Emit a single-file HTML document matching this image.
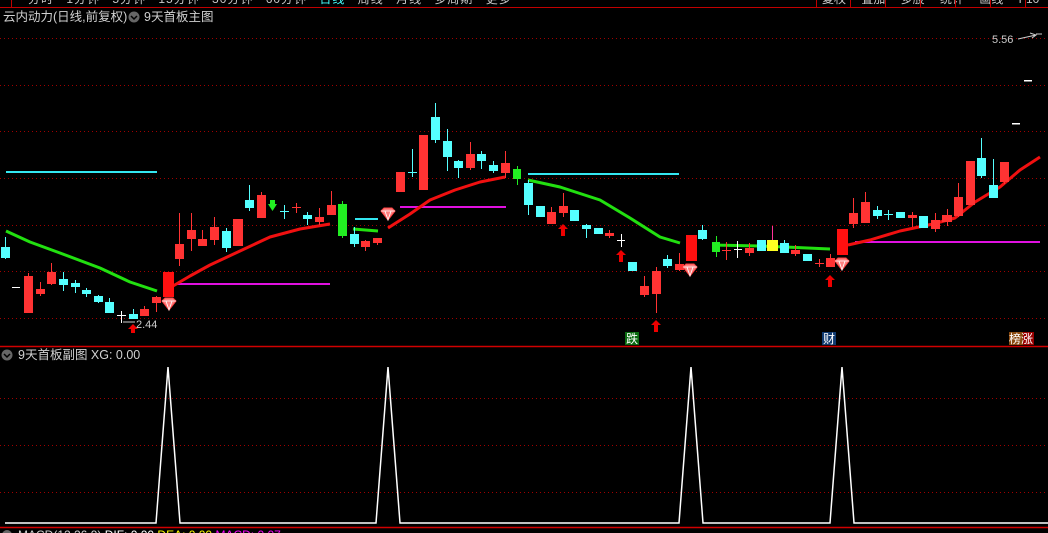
<!DOCTYPE html>
<html><head><meta charset="utf-8">
<style>
html,body{margin:0;padding:0;background:#000;width:1048px;height:533px;overflow:hidden}
svg{display:block}
text{font-family:"Liberation Sans","Noto Sans CJK SC",sans-serif}
</style></head><body>
<svg width="1048" height="533" viewBox="0 0 1048 533" xmlns="http://www.w3.org/2000/svg">
<rect width="1048" height="533" fill="#000"/>
<g font-size="12" fill="#c8c8c8">
<text x="28" y="3" word-spacing="8" letter-spacing="1">分时 1分钟 5分钟 15分钟 30分钟 60分钟 <tspan fill="#4ff">日线</tspan> 周线 月线 多周期 更多</text>
<text x="822" y="3" word-spacing="12">复权 叠加 多股 统计 画线 F10 标记</text>
</g>
<line x1="0" y1="7.5" x2="1048" y2="7.5" stroke="#c00000"/>
<g stroke="#c00000"><line x1="11.5" y1="0" x2="11.5" y2="7"/><line x1="816.5" y1="0" x2="816.5" y2="7"/><line x1="850.5" y1="0" x2="850.5" y2="7"/><line x1="885.5" y1="0" x2="885.5" y2="7"/><line x1="920.5" y1="0" x2="920.5" y2="7"/><line x1="955.5" y1="0" x2="955.5" y2="7"/><line x1="990.5" y1="0" x2="990.5" y2="7"/><line x1="1025.5" y1="0" x2="1025.5" y2="7"/></g>
<text x="3" y="21" font-size="12.5" fill="#d0d0d0">云内动力(日线,前复权)</text>
<circle cx="134" cy="17" r="5.5" fill="#666"/><path d="M131 16l3 3 3-3" stroke="#000" stroke-width="1.5" fill="none"/>
<text x="144" y="21" font-size="12.5" fill="#d0d0d0">9天首板主图</text>
<g stroke="#a00000" stroke-dasharray="1,3">
<line x1="0" y1="38.5" x2="1048" y2="38.5"/><line x1="0" y1="85.5" x2="1048" y2="85.5"/><line x1="0" y1="131.5" x2="1048" y2="131.5"/><line x1="0" y1="178.5" x2="1048" y2="178.5"/><line x1="0" y1="225.5" x2="1048" y2="225.5"/><line x1="0" y1="271.5" x2="1048" y2="271.5"/><line x1="0" y1="318.5" x2="1048" y2="318.5"/>
<line x1="0" y1="398.5" x2="1048" y2="398.5"/><line x1="0" y1="445.5" x2="1048" y2="445.5"/><line x1="0" y1="492.5" x2="1048" y2="492.5"/>
</g>
<text x="992" y="43" font-size="11" fill="#ccc">5.56</text>
<path d="M1018 39 L1036 35 M1030 33l6 2-4 3 M1036 34h6" stroke="#ccc" fill="none"/>
<rect x="1024" y="80" width="8" height="1.5" fill="#fff"/><rect x="1012" y="123" width="8" height="1.5" fill="#fff"/>
<g stroke-width="2">
<line x1="6" y1="172" x2="157" y2="172" stroke="#33e6f0"/>
<line x1="175" y1="284" x2="330" y2="284" stroke="#e010e0"/>
<line x1="355" y1="219" x2="378" y2="219" stroke="#33e6f0"/>
<line x1="400" y1="207" x2="506" y2="207" stroke="#e010e0"/>
<line x1="528" y1="174" x2="679" y2="174" stroke="#33e6f0"/>
<line x1="855" y1="242" x2="1040" y2="242" stroke="#e010e0"/>
</g>
<g fill="none" stroke-width="3" stroke-linejoin="round">
<polyline stroke="#22e010" points="6,231 30,242 60,253 100,268 130,282 157,291"/>
<polyline stroke="#22e010" points="353,229 378,231"/>
<polyline stroke="#22e010" points="528,180 560,187 600,200 630,218 660,237 680,243"/>
<polyline stroke="#22e010" points="712,245 760,246 785,247 830,249"/>
<polyline stroke="#f01010" points="173,286 190,276 210,265 240,251 270,237 300,229 330,224"/>
<polyline stroke="#f01010" points="388,228 410,214 430,200 455,190 480,182 505,177"/>
<polyline stroke="#f01010" points="848,245 870,240 900,231 933,224 955,218 975,202 1000,187 1020,170 1040,157"/>
</g>
<g id="c">
<g fill="#55ffff" stroke="#55ffff">
<line x1="5.5" y1="237" x2="5.5" y2="259"/><rect x="1" y="247" width="9" height="11" stroke="none"/>
<line x1="63.5" y1="272" x2="63.5" y2="291"/><rect x="59" y="279" width="9" height="6" stroke="none"/>
<line x1="75.5" y1="280" x2="75.5" y2="293"/><rect x="71" y="283" width="9" height="4" stroke="none"/>
<line x1="86.5" y1="288" x2="86.5" y2="297"/><rect x="82" y="290" width="9" height="4" stroke="none"/>
<line x1="98.5" y1="295" x2="98.5" y2="303"/><rect x="94" y="296" width="9" height="6" stroke="none"/>
<line x1="109.5" y1="298" x2="109.5" y2="313"/><rect x="105" y="302" width="9" height="11" stroke="none"/>
<line x1="133.5" y1="309" x2="133.5" y2="319"/><rect x="129" y="314" width="9" height="5" stroke="none"/>
<line x1="226.5" y1="228" x2="226.5" y2="252"/><rect x="222" y="231" width="9" height="17" stroke="none"/>
<line x1="249.5" y1="185" x2="249.5" y2="211"/><rect x="245" y="200" width="9" height="8" stroke="none"/>
<line x1="284.5" y1="205" x2="284.5" y2="219"/><line x1="280" y1="211.5" x2="289" y2="211.5"/>
<line x1="307.5" y1="212" x2="307.5" y2="225"/><rect x="303" y="215" width="9" height="4" stroke="none"/>
<line x1="354.5" y1="227" x2="354.5" y2="247"/><rect x="350" y="234" width="9" height="10" stroke="none"/>
<line x1="412.5" y1="149" x2="412.5" y2="177"/><line x1="408" y1="172.5" x2="417" y2="172.5"/>
<line x1="435.5" y1="103" x2="435.5" y2="143"/><rect x="431" y="117" width="9" height="23" stroke="none"/>
<line x1="447.5" y1="129" x2="447.5" y2="171"/><rect x="443" y="141" width="9" height="16" stroke="none"/>
<line x1="458.5" y1="160" x2="458.5" y2="178"/><rect x="454" y="161" width="9" height="7" stroke="none"/>
<line x1="481.5" y1="151" x2="481.5" y2="169"/><rect x="477" y="154" width="9" height="7" stroke="none"/>
<line x1="493.5" y1="161" x2="493.5" y2="173"/><rect x="489" y="165" width="9" height="6" stroke="none"/>
<line x1="528.5" y1="180" x2="528.5" y2="215"/><rect x="524" y="183" width="9" height="22" stroke="none"/>
<rect x="536" y="206" width="9" height="11" stroke="none"/>
<rect x="570" y="210" width="9" height="11" stroke="none"/>
<line x1="586.5" y1="224" x2="586.5" y2="238"/><rect x="582" y="225" width="9" height="4" stroke="none"/>
<rect x="594" y="228" width="9" height="6" stroke="none"/>
<rect x="628" y="262" width="9" height="9" stroke="none"/>
<line x1="667.5" y1="255" x2="667.5" y2="268"/><rect x="663" y="259" width="9" height="7" stroke="none"/>
<line x1="702.5" y1="225" x2="702.5" y2="240"/><rect x="698" y="230" width="9" height="9" stroke="none"/>
<rect x="757" y="240" width="9" height="11" stroke="none"/>
<line x1="784.5" y1="240" x2="784.5" y2="253"/><rect x="780" y="243" width="9" height="10" stroke="none"/>
<rect x="803" y="254" width="9" height="7" stroke="none"/>
<line x1="877.5" y1="206" x2="877.5" y2="219"/><rect x="873" y="210" width="9" height="6" stroke="none"/>
<line x1="888.5" y1="210" x2="888.5" y2="220"/><line x1="884" y1="214.5" x2="893" y2="214.5"/>
<rect x="896" y="212" width="9" height="6" stroke="none"/>
<rect x="919" y="216" width="9" height="12" stroke="none"/>
<line x1="981.5" y1="138" x2="981.5" y2="178"/><rect x="977" y="158" width="9" height="18" stroke="none"/>
<line x1="993.5" y1="159" x2="993.5" y2="198"/><rect x="989" y="185" width="9" height="13" stroke="none"/>
</g>
<g fill="#ff3333" stroke="#ff3333">
<line x1="28.5" y1="273" x2="28.5" y2="313"/><rect x="24" y="276" width="9" height="37" stroke="none"/>
<line x1="40.5" y1="282" x2="40.5" y2="296"/><rect x="36" y="289" width="9" height="5" stroke="none"/>
<line x1="51.5" y1="263" x2="51.5" y2="285"/><rect x="47" y="272" width="9" height="12" stroke="none"/>
<line x1="144.5" y1="306" x2="144.5" y2="316"/><rect x="140" y="309" width="9" height="7" stroke="none"/>
<line x1="156.5" y1="296" x2="156.5" y2="312"/><rect x="152" y="297" width="9" height="6" stroke="none"/>
<rect x="163" y="272" width="11" height="25" fill="#ff1010" stroke="none"/>
<line x1="179.5" y1="213" x2="179.5" y2="266"/><rect x="175" y="244" width="9" height="15" stroke="none"/>
<line x1="191.5" y1="213" x2="191.5" y2="251"/><rect x="187" y="230" width="9" height="9" stroke="none"/>
<line x1="202.5" y1="230" x2="202.5" y2="246"/><rect x="198" y="239" width="9" height="7" stroke="none"/>
<line x1="214.5" y1="217" x2="214.5" y2="245"/><rect x="210" y="227" width="9" height="13" stroke="none"/>
<rect x="233" y="219" width="10" height="27" stroke="none"/>
<line x1="261.5" y1="192" x2="261.5" y2="218"/><rect x="257" y="195" width="9" height="23" stroke="none"/>
<line x1="296.5" y1="203" x2="296.5" y2="213"/><line x1="292" y1="207.5" x2="301" y2="207.5"/>
<line x1="319.5" y1="208" x2="319.5" y2="225"/><rect x="315" y="217" width="9" height="5" stroke="none"/>
<line x1="331.5" y1="191" x2="331.5" y2="215"/><rect x="327" y="205" width="9" height="10" stroke="none"/>
<line x1="365.5" y1="240" x2="365.5" y2="251"/><rect x="361" y="241" width="9" height="6" stroke="none"/>
<line x1="377.5" y1="238" x2="377.5" y2="245"/><rect x="373" y="238" width="9" height="5" stroke="none"/>
<rect x="396" y="172" width="9" height="20" stroke="none"/>
<rect x="419" y="135" width="9" height="55" stroke="none"/>
<line x1="470.5" y1="142" x2="470.5" y2="170"/><rect x="466" y="154" width="9" height="14" stroke="none"/>
<line x1="505.5" y1="151" x2="505.5" y2="178"/><rect x="501" y="163" width="9" height="10" stroke="none"/>
<line x1="551.5" y1="207" x2="551.5" y2="224"/><rect x="547" y="212" width="9" height="12" stroke="none"/>
<line x1="563.5" y1="193" x2="563.5" y2="217"/><rect x="559" y="206" width="9" height="7" stroke="none"/>
<line x1="609.5" y1="230" x2="609.5" y2="238"/><rect x="605" y="233" width="9" height="3" stroke="none"/>
<line x1="644.5" y1="276" x2="644.5" y2="297"/><rect x="640" y="286" width="9" height="9" stroke="none"/>
<line x1="656.5" y1="267" x2="656.5" y2="313"/><rect x="652" y="271" width="9" height="23" stroke="none"/>
<line x1="679.5" y1="253" x2="679.5" y2="271"/><rect x="675" y="264" width="9" height="6" stroke="none"/>
<rect x="686" y="235" width="11" height="26" fill="#ff1010" stroke="none"/>
<line x1="726.5" y1="242" x2="726.5" y2="260"/><line x1="722" y1="250.5" x2="731" y2="250.5"/>
<line x1="749.5" y1="243" x2="749.5" y2="256"/><rect x="745" y="248" width="9" height="5" stroke="none"/>
<line x1="795.5" y1="245" x2="795.5" y2="256"/><rect x="791" y="250" width="9" height="4" stroke="none"/>
<line x1="819.5" y1="259" x2="819.5" y2="267"/><line x1="815" y1="263.5" x2="824" y2="263.5"/>
<line x1="830.5" y1="254" x2="830.5" y2="267"/><rect x="826" y="258" width="9" height="9" stroke="none"/>
<rect x="837" y="229" width="11" height="26" fill="#ff1010" stroke="none"/>
<line x1="853.5" y1="198" x2="853.5" y2="228"/><rect x="849" y="213" width="9" height="11" stroke="none"/>
<line x1="865.5" y1="192" x2="865.5" y2="223"/><rect x="861" y="202" width="9" height="21" stroke="none"/>
<line x1="912.5" y1="212" x2="912.5" y2="227"/><rect x="908" y="215" width="9" height="3" stroke="none"/>
<line x1="935.5" y1="213" x2="935.5" y2="232"/><rect x="931" y="220" width="9" height="9" stroke="none"/>
<line x1="947.5" y1="209" x2="947.5" y2="226"/><rect x="942" y="215" width="10" height="7" stroke="none"/>
<line x1="958.5" y1="183" x2="958.5" y2="217"/><rect x="954" y="197" width="9" height="19" stroke="none"/>
<rect x="966" y="161" width="9" height="44" stroke="none"/>
<line x1="1004.5" y1="162" x2="1004.5" y2="184"/><rect x="1000" y="162" width="9" height="20" stroke="none"/>
</g>
<g fill="#22ee22" stroke="#22ee22">
<line x1="342.5" y1="201" x2="342.5" y2="238"/><rect x="338" y="204" width="9" height="32" stroke="none"/>
<line x1="517.5" y1="166" x2="517.5" y2="185"/><rect x="513" y="169" width="8" height="10" stroke="none"/>
<line x1="716.5" y1="236" x2="716.5" y2="257"/><rect x="712" y="242" width="8" height="10" stroke="none"/>
<path d="M268 204h9l-4.5 7z" stroke="none"/><rect x="270" y="200" width="5" height="4" stroke="none"/>
</g>
<line x1="772.5" y1="226" x2="772.5" y2="240" stroke="#ff3399"/>
<rect x="767" y="240" width="11" height="11" fill="#ffff22"/>
<g stroke="#fff">
<line x1="12" y1="287.5" x2="20" y2="287.5"/>
<line x1="121.5" y1="311" x2="121.5" y2="323"/><line x1="117" y1="315.5" x2="126" y2="315.5"/>
<line x1="621.5" y1="234" x2="621.5" y2="247"/><line x1="617" y1="240.5" x2="625" y2="240.5"/>
<line x1="737.5" y1="241" x2="737.5" y2="258"/><line x1="734" y1="249.5" x2="742" y2="249.5"/>
</g>
</g>
<g id="gems">
<g transform="translate(169,304)"><path d="M-7-3 L-4-6 L4-6 L7-3 L0 6Z" fill="#ff8080" stroke="#ff4040"/><path d="M-7-3H7M-3-3L0 6 3-3" stroke="#fff" stroke-width="0.8" fill="none"/></g>
<g transform="translate(388,214)"><path d="M-7-3 L-4-6 L4-6 L7-3 L0 6Z" fill="#ff8080" stroke="#ff4040"/><path d="M-7-3H7M-3-3L0 6 3-3" stroke="#fff" stroke-width="0.8" fill="none"/></g>
<g transform="translate(690,270)"><path d="M-7-3 L-4-6 L4-6 L7-3 L0 6Z" fill="#ff8080" stroke="#ff4040"/><path d="M-7-3H7M-3-3L0 6 3-3" stroke="#fff" stroke-width="0.8" fill="none"/></g>
<g transform="translate(842,264)"><path d="M-7-3 L-4-6 L4-6 L7-3 L0 6Z" fill="#ff8080" stroke="#ff4040"/><path d="M-7-3H7M-3-3L0 6 3-3" stroke="#fff" stroke-width="0.8" fill="none"/></g>
</g>
<g fill="#ee0000">
<path d="M133 324l-5 5h3v4h4v-4h3z"/>
<path d="M563 224l-5 5h3v7h4v-7h3z"/>
<path d="M621 250l-5 5h3v7h4v-7h3z"/>
<path d="M656 320l-5 5h3v7h4v-7h3z"/>
<path d="M830 275l-5 5h3v7h4v-7h3z"/>
</g>
<text x="136" y="328" font-size="11" fill="#ccc">2.44</text>
<path d="M123 322h12" stroke="#ccc"/>
<rect x="625" y="332" width="14" height="13" fill="#0a6a10"/><text x="626" y="343" font-size="12" fill="#fff">跌</text>
<rect x="822" y="332" width="14" height="13" fill="#103a70"/><text x="823" y="343" font-size="12" fill="#fff">财</text>
<rect x="1009" y="332" width="14" height="13" fill="#8a4a10"/><rect x="1023" y="332" width="11" height="13" fill="#900"/><text x="1009" y="343" font-size="12" fill="#fff">榜涨</text>
<line x1="0" y1="346.5" x2="1048" y2="346.5" stroke="#d00000" stroke-width="1.5"/>
<circle cx="7" cy="355" r="5.5" fill="#666"/><path d="M4 354l3 3 3-3" stroke="#000" stroke-width="1.5" fill="none"/>
<text x="18" y="359" font-size="12.5" fill="#d0d0d0">9天首板副图 XG: 0.00</text>
<polyline fill="none" stroke="#fff" stroke-width="1.5" points="5,523 156,523 168,367 180,523 376,523 388,367 400,523 679,523 691,367 703,523 830,523 842,367 854,523 1048,523"/>
<line x1="0" y1="527.5" x2="1048" y2="527.5" stroke="#d00000" stroke-width="1.5"/>
<text x="18" y="539" font-size="12" fill="#d0d0d0">MACD(12,26,9) <tspan fill="#fff">DIF: 0.00</tspan> <tspan fill="#ff0">DEA: 0.00</tspan> <tspan fill="#f0f">MACD: 0.07</tspan></text>
<circle cx="7" cy="535" r="5" fill="#666"/>
</svg>
</body></html>
